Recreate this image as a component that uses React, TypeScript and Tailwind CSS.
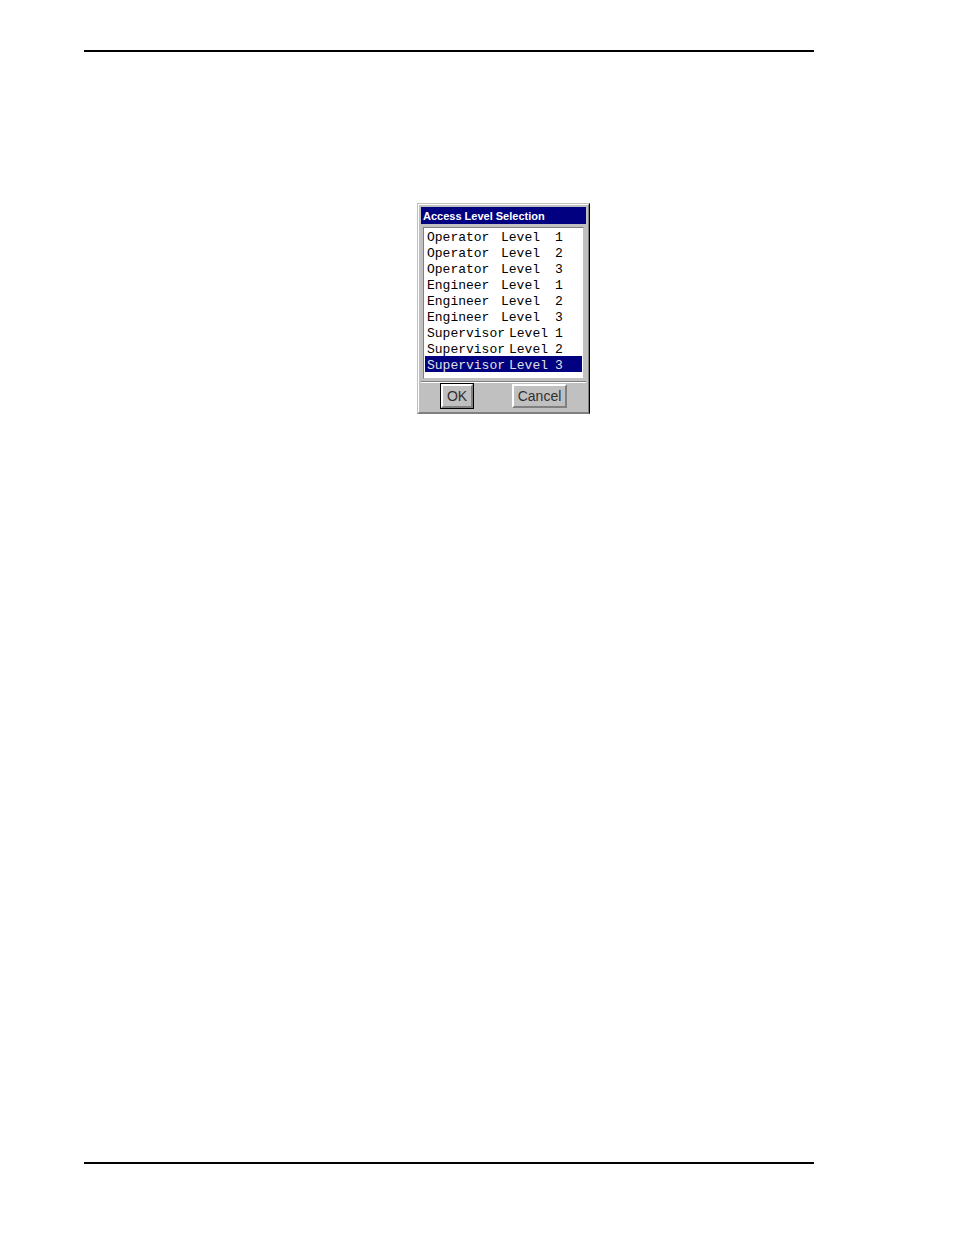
import { useState } from "react";

type Level = { name: string; number: number };

const levels: Level[] = ["Operator", "Engineer", "Supervisor"].flatMap((name) =>
  [1, 2, 3].map((number) => ({ name, number })),
);

function LevelRow({ level, selected, onSelect }: { level: Level; selected: boolean; onSelect: () => void }) {
  const wide = level.name.length > 8;
  return (
    <button
      type="button"
      role="option"
      aria-selected={selected}
      onClick={onSelect}
      className={`flex h-4 w-full items-start pt-[2px] pl-[2px] text-left ${
        selected ? "bg-[#000080] text-[#e0e0e0]" : "text-black"
      }`}
    >
      <span className={wide ? "w-[82px]" : "w-[74px]"}>{level.name}</span>
      <span className={wide ? "w-[46px]" : "w-[54px]"}>Level</span>
      <span>{level.number}</span>
    </button>
  );
}

function AccessDialog() {
  const [selected, setSelected] = useState(levels.length - 1);
  return (
    <section
      role="dialog"
      aria-labelledby="dialog-title"
      className="w-[173px] border border-t-[#c0c0c0] border-r-black border-b-[#808080] border-l-[#c0c0c0]"
    >
      <div className="border border-t-white border-r-[#808080] border-b-[#808080] border-l-white bg-[#c0c0c0] px-[2px] pt-[2px]">
        <h1
          id="dialog-title"
          className="h-[17px] bg-[#000080] pl-[2px] font-['Liberation_Sans',sans-serif] text-[11px] leading-[18px] font-bold whitespace-nowrap text-white"
        >
          Access Level Selection
        </h1>
        <div
          role="listbox"
          aria-labelledby="dialog-title"
          className="mx-[2px] mt-[3px] h-[152px] border border-t-[#808080] border-r-[#c0c0c0] border-b-[#c0c0c0] border-l-[#808080] bg-white pr-px pl-px font-['Liberation_Mono',monospace] text-[13px] leading-4"
        >
          {levels.map((level, index) => (
            <LevelRow
              key={`${level.name}${level.number}`}
              level={level}
              selected={index === selected}
              onSelect={() => setSelected(index)}
            />
          ))}
        </div>
        <div className="mt-[2px] border-t border-[#808080]">
          <div className="flex items-center justify-between border-t border-white px-[19px] pb-[3px] font-['Liberation_Sans',sans-serif] text-sm leading-5 text-[#303030]">
            <button type="button" className="h-[26px] w-[34px] border border-black">
              <span className="flex h-6 items-center justify-center border-2 border-t-white border-r-[#808080] border-b-[#808080] border-l-white">
                OK
              </span>
            </button>
            <button
              type="button"
              className="h-6 w-[55px] border-2 border-t-white border-r-[#808080] border-b-[#808080] border-l-white"
            >
              Cancel
            </button>
          </div>
        </div>
      </div>
    </section>
  );
}

export default function App() {
  return (
    <main className="flex min-h-screen flex-col bg-white pt-[50px] pr-[140px] pb-[71px] pl-[84px]">
      <div className="flex grow flex-col border-y-2 border-black pt-[151px] pl-[333px]">
        <AccessDialog />
      </div>
    </main>
  );
}
